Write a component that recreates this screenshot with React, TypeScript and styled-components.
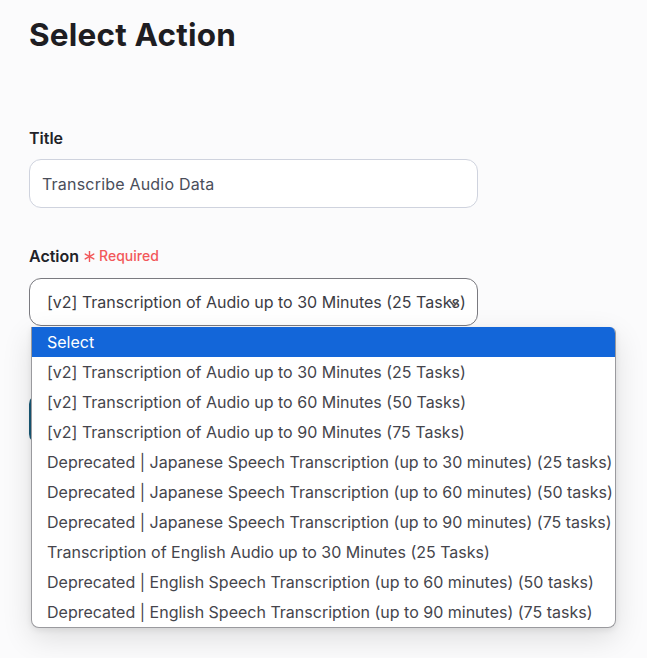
import { createGlobalStyle, styled } from "styled-components";

const GlobalStyle = createGlobalStyle`
    body {
        margin: 0;
        background: #fbfbfc;
        font-family: Inter, "Noto Sans", sans-serif;
        color: #1f1f24;
    }
`;

const Page = styled.div`
    box-sizing: border-box;
    min-height: 658px;
    padding: 14px 29px 0;
    width: 647px;
`;

const Form = styled.div`
    width: 449px;
`;

const Heading = styled.h1`
    margin: 0;
    font-size: 31.5px;
    font-weight: 700;
    line-height: 42px;
    letter-spacing: 0.2px;
    color: #1e1d22;
`;

const Field = styled.div<{ $top: number }>`
    margin-top: ${(p) => p.$top}px;
    position: relative;
`;

const Label = styled.div`
    font-size: 16px;
    font-weight: 600;
    line-height: 20px;
    color: #222228;
    display: flex;
    align-items: center;
    gap: 5px;
`;

const Required = styled.span`
    color: #f2585a;
    font-size: 14px;
    font-weight: 500;
    display: flex;
    align-items: center;
    gap: 4px;
`;

const Input = styled.div`
    margin-top: 11px;
    height: 47px;
    border: 1px solid #cfd3de;
    border-radius: 12px;
    background: #fff;
    display: flex;
    align-items: center;
    padding: 0 12px;
    font-size: 16px;
    color: #4a4e5a;
    letter-spacing: 0.2px;
`;

const SelectBox = styled.div`
    margin-top: 12px;
    height: 46px;
    border: 1px solid #7a7a80;
    border-radius: 12px;
    background: #fff;
    display: flex;
    align-items: center;
    padding: 0 10px 0 17px;
    font-size: 16px;
    color: #3c3c44;
    position: relative;
    white-space: nowrap;
    overflow: hidden;
`;

const Chevron = styled.svg`
    position: absolute;
    right: 17px;
    top: 18px;
`;

const NextButton = styled.div`
    margin-top: 68px;
    width: 120px;
    height: 50px;
    border-radius: 10px;
    background: #185a78;
`;

const Menu = styled.ul`
    position: absolute;
    top: 81px;
    left: 2px;
    width: 583px;
    margin: 0;
    padding: 0;
    list-style: none;
    background: #fff;
    border: 1px solid #9a9a9e;
    border-top: none;
    border-radius: 0 6px 8px 8px;
    box-shadow: 0 10px 30px rgba(0, 0, 0, 0.12), 0 2px 6px rgba(0, 0, 0, 0.08);
    overflow: hidden;
    z-index: 10;
`;

const Option = styled.li<{ $active?: boolean }>`
    height: 30px;
    display: flex;
    align-items: center;
    padding-left: 15px;
    font-size: 16px;
    white-space: nowrap;
    color: ${(p) => (p.$active ? "#ffffff" : "#45454c")};
    background: ${(p) => (p.$active ? "#1366d9" : "transparent")};
`;

const options = [
    "[v2] Transcription of Audio up to 30 Minutes (25 Tasks)",
    "[v2] Transcription of Audio up to 60 Minutes (50 Tasks)",
    "[v2] Transcription of Audio up to 90 Minutes (75 Tasks)",
    "Deprecated | Japanese Speech Transcription (up to 30 minutes) (25 tasks)",
    "Deprecated | Japanese Speech Transcription (up to 60 minutes) (50 tasks)",
    "Deprecated | Japanese Speech Transcription (up to 90 minutes) (75 tasks)",
    "Transcription of English Audio up to 30 Minutes (25 Tasks)",
    "Deprecated | English Speech Transcription (up to 60 minutes) (50 tasks)",
    "Deprecated | English Speech Transcription (up to 90 minutes) (75 tasks)",
];

export default function App() {
    return (
        <>
            <GlobalStyle />
            <Page>
                <Form>
                    <Heading>Select Action</Heading>
                    <Field $top={72}>
                        <Label>Title</Label>
                        <Input>Transcribe Audio Data</Input>
                    </Field>
                    <Field $top={38}>
                        <Label>
                            Action
                            <Required>
                                <svg width="11" height="11" viewBox="0 0 10 10">
                                    <g stroke="#f2585a" strokeWidth="1.3" strokeLinecap="round">
                                        <line x1="5" y1="0.5" x2="5" y2="9.5" />
                                        <line x1="1.1" y1="2.75" x2="8.9" y2="7.25" />
                                        <line x1="1.1" y1="7.25" x2="8.9" y2="2.75" />
                                    </g>
                                </svg>
                                Required
                            </Required>
                        </Label>
                        <SelectBox>
                            [v2] Transcription of Audio up to 30 Minutes (25 Tasks)
                            <Chevron width="12" height="12" viewBox="0 0 12 12">
                                <path d="M1.5 3.5 L6 9 L10.5 3.5" fill="none" stroke="#55555c" strokeWidth="1.6" />
                            </Chevron>
                        </SelectBox>
                        <NextButton />
                        <Menu>
                            <Option $active>Select</Option>
                            {options.map((o) => (
                                <Option key={o}>{o}</Option>
                            ))}
                        </Menu>
                    </Field>
                </Form>
            </Page>
        </>
    );
}
